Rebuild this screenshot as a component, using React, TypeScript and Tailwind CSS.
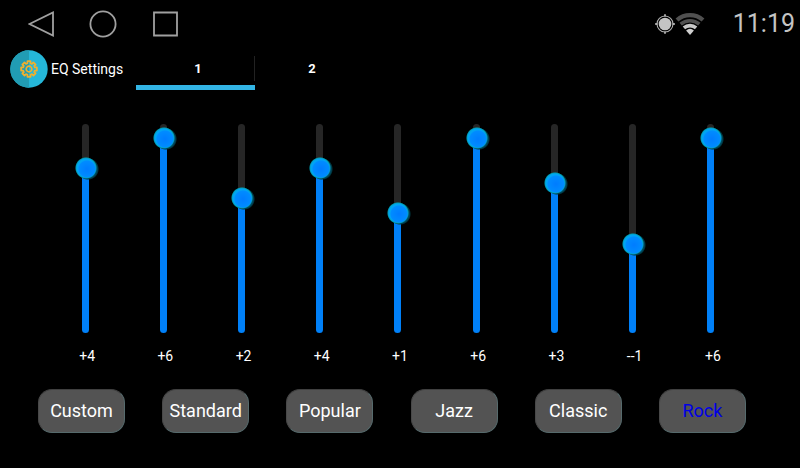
import { useState } from "react";
import clsx from "clsx";

const MIN = -6;
const MAX = 6;

const presets = ["Custom", "Standard", "Popular", "Jazz", "Classic", "Rock"];
const rock = [4, 6, 2, 4, 1, 6, 3, -1, 6];

// eight-tooth gear outline around 0,0
const gearPath =
  Array.from({ length: 8 }, (_, i) => {
    const points: [number, number][] = [
      [-15, 6],
      [-11, 8],
      [11, 8],
      [15, 6],
    ];
    return points
      .map(([deg, r]) => {
        const a = ((i * 45 + deg) * Math.PI) / 180;
        return `${(r * Math.cos(a)).toFixed(2)} ${(r * Math.sin(a)).toFixed(2)}`;
      })
      .join(" L");
  })
    .map((tooth, i) => (i === 0 ? "M" : "L") + tooth)
    .join(" ") + " Z";

function EqIcon() {
  return (
    <svg width="38" height="38" viewBox="-19 -19 38 38" aria-hidden="true">
      <circle r="18.7" fill="#25b7d9" />
      <path d="M0 -18.7 A18.7 18.7 0 0 0 0 18.7 Z" fill="#219cb4" />
      <path d={gearPath} fill="none" stroke="#efb02f" strokeWidth="1.8" strokeLinejoin="round" />
      <circle r="2.8" fill="none" stroke="#efb02f" strokeWidth="1.7" />
    </svg>
  );
}

function GpsIcon() {
  return (
    <svg width="20" height="20" viewBox="-10 -10 20 20" aria-hidden="true">
      <circle r="6.3" fill="#c4c4c4" />
      <circle r="8" fill="none" stroke="#b0b0b0" strokeWidth="1.1" />
      <path d="M0 -9.8 V-7.5 M0 7.5 V9.8 M-9.8 0 H-7.5 M7.5 0 H9.8" stroke="#b0b0b0" strokeWidth="1.8" />
    </svg>
  );
}

function WifiIcon() {
  return (
    <svg width="30" height="24" viewBox="0 0 30 24" fill="none" aria-hidden="true">
      <path d="M2 8 A19.8 19.8 0 0 1 28 8" stroke="#505050" strokeWidth="4.3" />
      <path d="M5.7 12.2 A14.2 14.2 0 0 1 24.3 12.2" stroke="#505050" strokeWidth="3.6" />
      <path d="M8.9 15.9 A9.3 9.3 0 0 1 21.1 15.9" stroke="#c8c8c8" strokeWidth="3.6" />
      <path d="M11.1 18.4 A6 6 0 0 1 18.9 18.4 L15 23 Z" fill="#d0d0d0" />
    </svg>
  );
}

function StatusBar() {
  return (
    <header className="flex h-12 items-center justify-between pr-[5px] pl-6">
      <nav className="flex gap-8 pl-1" aria-label="System">
        <button aria-label="Back">
          <svg width="28" height="28" viewBox="0 0 28 28" fill="none" stroke="#a0a0a0" strokeWidth="1.8">
            <path d="M1.5 14 L25 2.5 V25.5 Z" />
          </svg>
        </button>
        <button aria-label="Home">
          <svg width="30" height="28" viewBox="0 0 30 28" fill="none" stroke="#a0a0a0" strokeWidth="1.8">
            <circle cx="15" cy="14" r="12.6" />
          </svg>
        </button>
        <button aria-label="Recents">
          <svg width="28" height="28" viewBox="0 0 28 28" fill="none" stroke="#a0a0a0" strokeWidth="1.8">
            <path d="M4 2.5 H27 V25.5 H4 Z" />
          </svg>
        </button>
      </nav>
      <div className="flex items-center">
        <GpsIcon />
        <WifiIcon />
        <span className="ml-7 text-[25px] leading-8 text-[#c4c4c4]">11:19</span>
      </div>
    </header>
  );
}

interface BandProps {
  value: number;
  index: number;
  onChange: (v: number) => void;
}

function Band({ value, index, onChange }: BandProps) {
  const id = `band-${index}`;
  // the fill ends behind the middle of the thumb
  const fill = ((value - MIN) / (MAX - MIN)) * 86 + 7;
  return (
    <div className="flex flex-col items-center gap-[13px]">
      <input
        id={id}
        type="range"
        min={MIN}
        max={MAX}
        value={value}
        onChange={(e) => onChange(Number(e.target.value))}
        style={{ "--fill": `${fill}%` } as React.CSSProperties}
        className="h-[209px] w-[27px] cursor-pointer appearance-none bg-transparent [direction:rtl] [writing-mode:vertical-lr] [&::-webkit-slider-runnable-track]:mx-auto [&::-webkit-slider-runnable-track]:w-[7px] [&::-webkit-slider-runnable-track]:rounded-full [&::-webkit-slider-runnable-track]:bg-[linear-gradient(to_top,#0080f8_var(--fill),#262626_var(--fill))] [&::-webkit-slider-thumb]:ml-[-10px] [&::-webkit-slider-thumb]:h-7 [&::-webkit-slider-thumb]:w-7 [&::-webkit-slider-thumb]:appearance-none [&::-webkit-slider-thumb]:bg-[radial-gradient(circle_at_15px_15px,#007cff_0,#008cff_8px,transparent_9px),radial-gradient(circle_at_14px_14px,#00a4f4_9px,#00a0b8_10px,transparent_11px),radial-gradient(circle_at_16px_15px,#004a66_9px,#003840_10px,transparent_11px)]"
      />
      <label htmlFor={id} className="pl-1 text-sm leading-5 text-white">
        {value < 0 ? `-${value}` : `+${value}`}
      </label>
    </div>
  );
}

export default function App() {
  const [tab, setTab] = useState(1);
  const [preset, setPreset] = useState("Rock");
  const [bands, setBands] = useState(rock);

  return (
    <div className="min-h-screen bg-black font-['Roboto',sans-serif]">
      <StatusBar />

      <div className="flex h-[42px] items-stretch pl-[10px]">
        <div className="flex w-[126px] items-center gap-[3px]">
          <EqIcon />
          <h1 className="text-sm whitespace-nowrap text-white">EQ Settings</h1>
        </div>
        <div role="tablist" className="flex">
          {[1, 2].map((n) => (
            <button
              key={n}
              role="tab"
              aria-selected={tab === n}
              onClick={() => setTab(n)}
              className={clsx(
                "flex flex-col justify-between text-[13px] font-bold text-white",
                n === 1 ? "w-[119px]" : "w-[109px]"
              )}
            >
              <span
                className={clsx(
                  "mt-2 flex h-[25px] w-full items-center justify-center border-r pl-[6px]",
                  n === 1 ? "border-[#222222]" : "border-transparent"
                )}
              >
                {n}
              </span>
              <span className={clsx("h-[5px] w-full", tab === n && "bg-[#33b5e5]")} />
            </button>
          ))}
        </div>
      </div>

      <main className="pt-[34px]">
        <div className="grid grid-cols-9 pr-[50px] pl-[46px]">
          {bands.map((v, i) => (
            <Band
              key={i}
              index={i}
              value={v}
              onChange={(next) => setBands(bands.map((b, j) => (j === i ? next : b)))}
            />
          ))}
        </div>

        <div className="mt-[23px] flex justify-between pr-[54px] pl-[38px]">
          {presets.map((name) => (
            <button
              key={name}
              onClick={() => setPreset(name)}
              className={clsx(
                "h-11 w-[87px] rounded-[14px] border border-t-[#404040] border-r-[#566a6c] border-b-[#566a6c] border-l-[#484848] bg-[#535353] text-lg",
                preset === name ? "text-[#0000e6]" : "text-white"
              )}
            >
              {name}
            </button>
          ))}
        </div>
      </main>
    </div>
  );
}
